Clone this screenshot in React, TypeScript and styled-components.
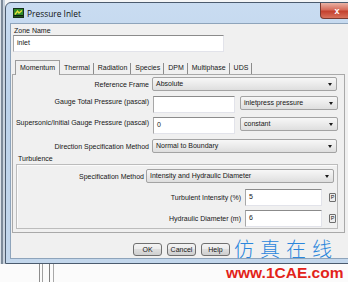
import styled, { createGlobalStyle } from "styled-components";

const GlobalStyle = createGlobalStyle`
  html, body { margin: 0; padding: 0; }
  body {
    width: 348px;
    height: 282px;
    overflow: hidden;
    background: #f6f7f8;
    font-family: "Liberation Sans", Arial, sans-serif;
    color: #161616;
  }
`;

const Page = styled.div`
  position: relative;
  width: 348px;
  height: 282px;
  overflow: hidden;
  box-sizing: border-box;
  padding: 2px 0 0 5px;
  background:
    linear-gradient(to right, #dce3ea 0 1px, #7d8a99 1px 3px, #c9d3de 3px 5px, transparent 5px) left top / 5px 100% no-repeat,
    #f4f5f6;
`;

const Window = styled.div`
  width: 352px;
  box-sizing: border-box;
  border: 1px solid #4b5b6e;
  border-radius: 6px 6px 0 0;
  background: linear-gradient(#c9dcf1, #bcd2ea 40%, #c3d7ec);
  padding: 0 4px 4px 4px;
`;

const TitleBar = styled.div`
  height: 20px;
  display: flex;
  align-items: center;
  padding-left: 3px;
  gap: 3px;
`;

const Title = styled.span`
  font-family: "Open Sans", "Liberation Sans", sans-serif;
  font-size: 8.4px;
  color: #111;
`;

const CloseButton = styled.div`
  margin-left: auto;
  align-self: flex-start;
  width: 32px;
  height: 16px;
  border: 1px solid #7a3a30;
  border-top: none;
  border-radius: 0 0 4px 4px;
  background: linear-gradient(#e9b2a4, #d66c5a 45%, #c4412e 55%, #d8725c);
  color: #fff;
  font-size: 9px;
  font-weight: bold;
  display: flex;
  align-items: center;
  justify-content: center;
  box-sizing: border-box;
  padding-left: 2px;
`;

const Body = styled.div`
  background: #f0f0f0;
  border: 1px solid #8ea4bb;
  display: flex;
  flex-direction: column;
  font-size: 7px;
  padding-bottom: 2px;
`;

const ZoneLabel = styled.div`
  margin: 3px 0 0 3px;
  height: 8px;
  line-height: 8px;
`;

const TextBox = styled.div<{ $w: number }>`
  width: ${(p) => p.$w}px;
  height: 17px;
  flex: none;
  box-sizing: border-box;
  background: #fff;
  border: 1px solid #e2e3ea;
  border-top-color: #8b8b8b;
  border-left-color: #a7a7a7;
  padding: 2px 0 0 3px;
  line-height: 9px;
`;

const ZoneBox = styled(TextBox)`
  margin-left: 2px;
`;

const TabRow = styled.div`
  margin: 8px 0 0 4px;
  height: 15px;
  display: flex;
  align-items: stretch;
  position: relative;
  z-index: 1;
`;

const Tab = styled.div<{ $active?: boolean }>`
  position: relative;
  padding: 0 ${(p) => (p.$active ? 4 : 3)}px;
  line-height: 14px;
  box-sizing: border-box;
  border: 1px solid ${(p) => (p.$active ? "#9c9c9c" : "transparent")};
  border-bottom: none;
  background: ${(p) => (p.$active ? "#f0f0f0" : "transparent")};
  &::after {
    content: "";
    display: ${(p) => (p.$active ? "none" : "block")};
    position: absolute;
    right: -1px;
    top: 2px;
    height: 11px;
    border-right: 1px solid #8c8c8c;
  }
`;

const TabPanel = styled.div`
  margin: -1px 0 0 1px;
  width: 333px;
  box-sizing: border-box;
  border: 1px solid #a9a9a9;
  padding: 0 0 3px 0;
  display: flex;
  flex-direction: column;
`;

const Row = styled.div<{ $top: number; $h?: number; $gap?: number; $start?: boolean }>`
  display: flex;
  align-items: ${(p) => (p.$start ? "flex-start" : "center")};
  margin-top: ${(p) => p.$top}px;
  height: ${(p) => p.$h ?? 17}px;
  gap: ${(p) => p.$gap ?? 3}px;
`;

const Label = styled.span<{ $w: number }>`
  width: ${(p) => p.$w}px;
  flex: none;
  text-align: right;
  white-space: nowrap;
  line-height: 11px;
`;

const Select = styled.div<{ $w: number; $shift?: number }>`
  position: relative;
  width: ${(p) => p.$w}px;
  margin-left: ${(p) => p.$shift ?? 0}px;
  height: 14px;
  flex: none;
  box-sizing: border-box;
  border: 1px solid #a3a3a3;
  border-radius: 2px;
  background: linear-gradient(#f7f7f7, #ebebeb 50%, #dedede);
  padding-left: 3px;
  line-height: 12px;
  white-space: nowrap;
  overflow: hidden;
  &::after {
    content: "";
    position: absolute;
    right: 4px;
    top: 5px;
    border-left: 2.5px solid transparent;
    border-right: 2.5px solid transparent;
    border-top: 3px solid #1a1a1a;
  }
`;

const Group = styled.div`
  margin: 2px 0 0 3px;
  width: 322px;
`;

const GroupTitle = styled.div`
  height: 8px;
  line-height: 8px;
  padding-left: 2px;
`;

const GroupBox = styled.div`
  margin-top: 1px;
  border: 1px solid #bcbcbc;
  box-shadow: inset 1px 1px #fbfbfb;
  padding-bottom: 1px;
  display: flex;
  flex-direction: column;
`;

const PButton = styled.div`
  width: 7px;
  height: 9px;
  flex: none;
  margin-left: 3px;
  box-sizing: border-box;
  border: 1px solid #6e6e6e;
  border-radius: 1px;
  background: #ececec;
  font-size: 5.5px;
  line-height: 7px;
  text-align: center;
`;

const ButtonBar = styled.div`
  margin-top: 10px;
  padding-left: 122px;
  display: flex;
  gap: 5px;
`;

const Button = styled.div`
  width: 29px;
  height: 13px;
  box-sizing: border-box;
  border: 1px solid #707070;
  border-radius: 3px;
  background: linear-gradient(#f3f3f3, #ebebeb 50%, #dddddd 50%, #cfcfcf);
  text-align: center;
  line-height: 11px;
`;

const BottomDesk = styled.div`
  height: 20px;
  margin-left: -5px;
  background:
    linear-gradient(to right,
      transparent 39px, #8d8d8d 39px 40px, transparent 40px 42px, #a0a0a0 42px 43px,
      transparent 43px 49px, #7f7f7f 49px 50px, transparent 50px 53px, #a8a8a8 53px 54px, transparent 54px),
    #fbfbfb;
`;

const MarkCn = styled.div`
  position: absolute;
  left: 234px;
  top: 238px;
  font-family: "Noto Sans CJK SC", sans-serif;
  font-weight: 300;
  font-size: 20px;
  letter-spacing: 6px;
  color: #2a86dc;
  line-height: 22px;
`;

const MarkUrl = styled.div`
  position: absolute;
  left: 226px;
  top: 264px;
  font-size: 15.5px;
  font-weight: bold;
  color: #e2231a;
  line-height: 18px;
  text-shadow: 0 0 2px #fff;
`;

const AppIcon = () => (
  <svg width="11" height="10" viewBox="0 0 11 10">
    <rect x="0" y="0" width="11" height="10" fill="#17301a" />
    <rect x="1" y="1" width="9" height="8" fill="#2f8a2a" />
    <path d="M2 6.5 L4.5 3 L6 5 L9 2.5" stroke="#e8e23a" strokeWidth="1.3" fill="none" />
    <rect x="1" y="7" width="9" height="1.5" fill="#0f1f10" />
  </svg>
);

const tabs = ["Momentum", "Thermal", "Radiation", "Species", "DPM", "Multiphase", "UDS"];

export default function App() {
  return (
    <>
      <GlobalStyle />
      <Page>
        <Window>
          <TitleBar>
            <AppIcon />
            <Title>Pressure Inlet</Title>
            <CloseButton>x</CloseButton>
          </TitleBar>
          <Body>
            <ZoneLabel>Zone Name</ZoneLabel>
            <ZoneBox $w={211}>inlet</ZoneBox>
            <TabRow>
              {tabs.map((t, i) => (
                <Tab key={t} $active={i === 0}>
                  {t}
                </Tab>
              ))}
            </TabRow>
            <TabPanel>
              <Row $top={2} $h={14}>
                <Label $w={136}>Reference Frame</Label>
                <Select $w={185}>Absolute</Select>
              </Row>
              <Row $top={5} $gap={4} $start>
                <Label $w={136}>Gauge Total Pressure (pascal)</Label>
                <TextBox $w={82} />
                <Select $w={98} $shift={1}>inletpress pressure</Select>
              </Row>
              <Row $top={4} $gap={4} $start>
                <Label $w={136}>Supersonic/Initial Gauge Pressure (pascal)</Label>
                <TextBox $w={82}>0</TextBox>
                <Select $w={98} $shift={1}>constant</Select>
              </Row>
              <Row $top={5} $h={14}>
                <Label $w={136}>Direction Specification Method</Label>
                <Select $w={185}>Normal to Boundary</Select>
              </Row>
              <Group>
                <GroupTitle>Turbulence</GroupTitle>
                <GroupBox>
                  <Row $top={4} $h={14} $gap={2}>
                    <Label $w={127}>Specification Method</Label>
                    <Select $w={188}>Intensity and Hydraulic Diameter</Select>
                  </Row>
                  <Row $top={6} $gap={4}>
                    <Label $w={224}>Turbulent Intensity (%)</Label>
                    <TextBox $w={77}>5</TextBox>
                    <PButton>P</PButton>
                  </Row>
                  <Row $top={4} $gap={4}>
                    <Label $w={224}>Hydraulic Diameter (m)</Label>
                    <TextBox $w={77}>6</TextBox>
                    <PButton>P</PButton>
                  </Row>
                </GroupBox>
              </Group>
            </TabPanel>
            <ButtonBar>
              <Button>OK</Button>
              <Button>Cancel</Button>
              <Button>Help</Button>
            </ButtonBar>
          </Body>
        </Window>
        <BottomDesk />
        <MarkCn>仿真在线</MarkCn>
        <MarkUrl>www.1CAE.com</MarkUrl>
      </Page>
    </>
  );
}
